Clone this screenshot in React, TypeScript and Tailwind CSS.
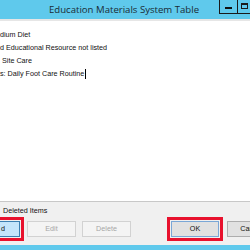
import React from 'react';

const lines = ['dium Diet', 'd Educational Resource not listed', '\u00a0Site Care'];

export default function App() {
  return (
    <div className="w-[250px] h-[250px] overflow-hidden flex flex-col bg-[#f0f0f0] font-['Liberation_Sans',Arial,sans-serif]">
      {/* title bar */}
      <div className="h-[19px] shrink-0 bg-[#5fc9ec] flex items-start">
        <div className="w-[219px] shrink-0 pl-[49px] whitespace-nowrap overflow-hidden text-[9.6px] leading-[19px] text-[#1a2b35] font-['Open_Sans','Liberation_Sans',sans-serif]">
          Education Materials System Table
        </div>
        <div className="w-[19px] shrink-0 h-[14px] border-x border-b border-[#1a1a1a] flex items-center justify-center">
          <div className="w-[7px] h-[2px] bg-[#111] mt-[2px]" />
        </div>
        <div className="w-[12px] shrink-0 h-[14px] border-b border-[#1a1a1a] flex items-start pl-[3px] pt-[3px]">
          <div className="w-[7px] h-[6px] border border-[#1a1a1a] border-t-2" />
        </div>
      </div>
      <div className="h-[2px] shrink-0 bg-[#e6e6e6]" />

      {/* text box */}
      <div className="h-[181px] shrink-0 bg-white border-b border-[#c8c8c8] pt-[7px] text-[7.2px] leading-[13px] text-[#111]">
        {lines.map((l) => (
          <div key={l} className="whitespace-nowrap">{l}</div>
        ))}
        <div className="whitespace-nowrap flex items-center">
          s: Daily Foot Care Routine
          <span className="inline-block w-px h-[10px] bg-black ml-px" />
        </div>
      </div>

      {/* bottom controls */}
      <div className="flex-1 flex flex-col text-[7.2px]">
        <div className="mt-[4px] leading-[10px] pl-[3px] text-[#111] whitespace-nowrap">Deleted Items</div>
        <div className="mt-px h-[24px] flex items-center overflow-hidden">
          <div className="shrink-0 h-[24px] border-y-[3px] border-r-[3px] border-[#e8112d] pr-px py-px flex">
            <div className="w-[20px] h-[16px] bg-[#c4e5fb] border-y border-r border-[#3c7fb1] leading-[14px] pl-px text-[#111]">d</div>
          </div>
          <button className="shrink-0 ml-[3px] w-[49px] h-[16px] bg-[#f4f4f4] border border-[#d2d2d2] text-[#a6a6a6] leading-[14px]">Edit</button>
          <button className="shrink-0 ml-[6px] w-[49px] h-[16px] bg-[#f4f4f4] border border-[#d2d2d2] text-[#a6a6a6] leading-[14px]">Delete</button>
          <div className="shrink-0 ml-[36px] h-[24px] border-[3px] border-[#e8112d] p-px flex">
            <button className="w-[48px] h-[16px] bg-[#e1e1e1] border border-[#7aa7d6] text-[#111] leading-[14px]">OK</button>
          </div>
          <button className="shrink-0 ml-[4px] w-[49px] h-[16px] bg-[#e1e1e1] border border-[#adadad] text-[#111] leading-[14px]">Cancel</button>
        </div>
        <div className="mt-auto h-[5px] bg-[#5fc9ec]" />
      </div>
    </div>
  );
}
